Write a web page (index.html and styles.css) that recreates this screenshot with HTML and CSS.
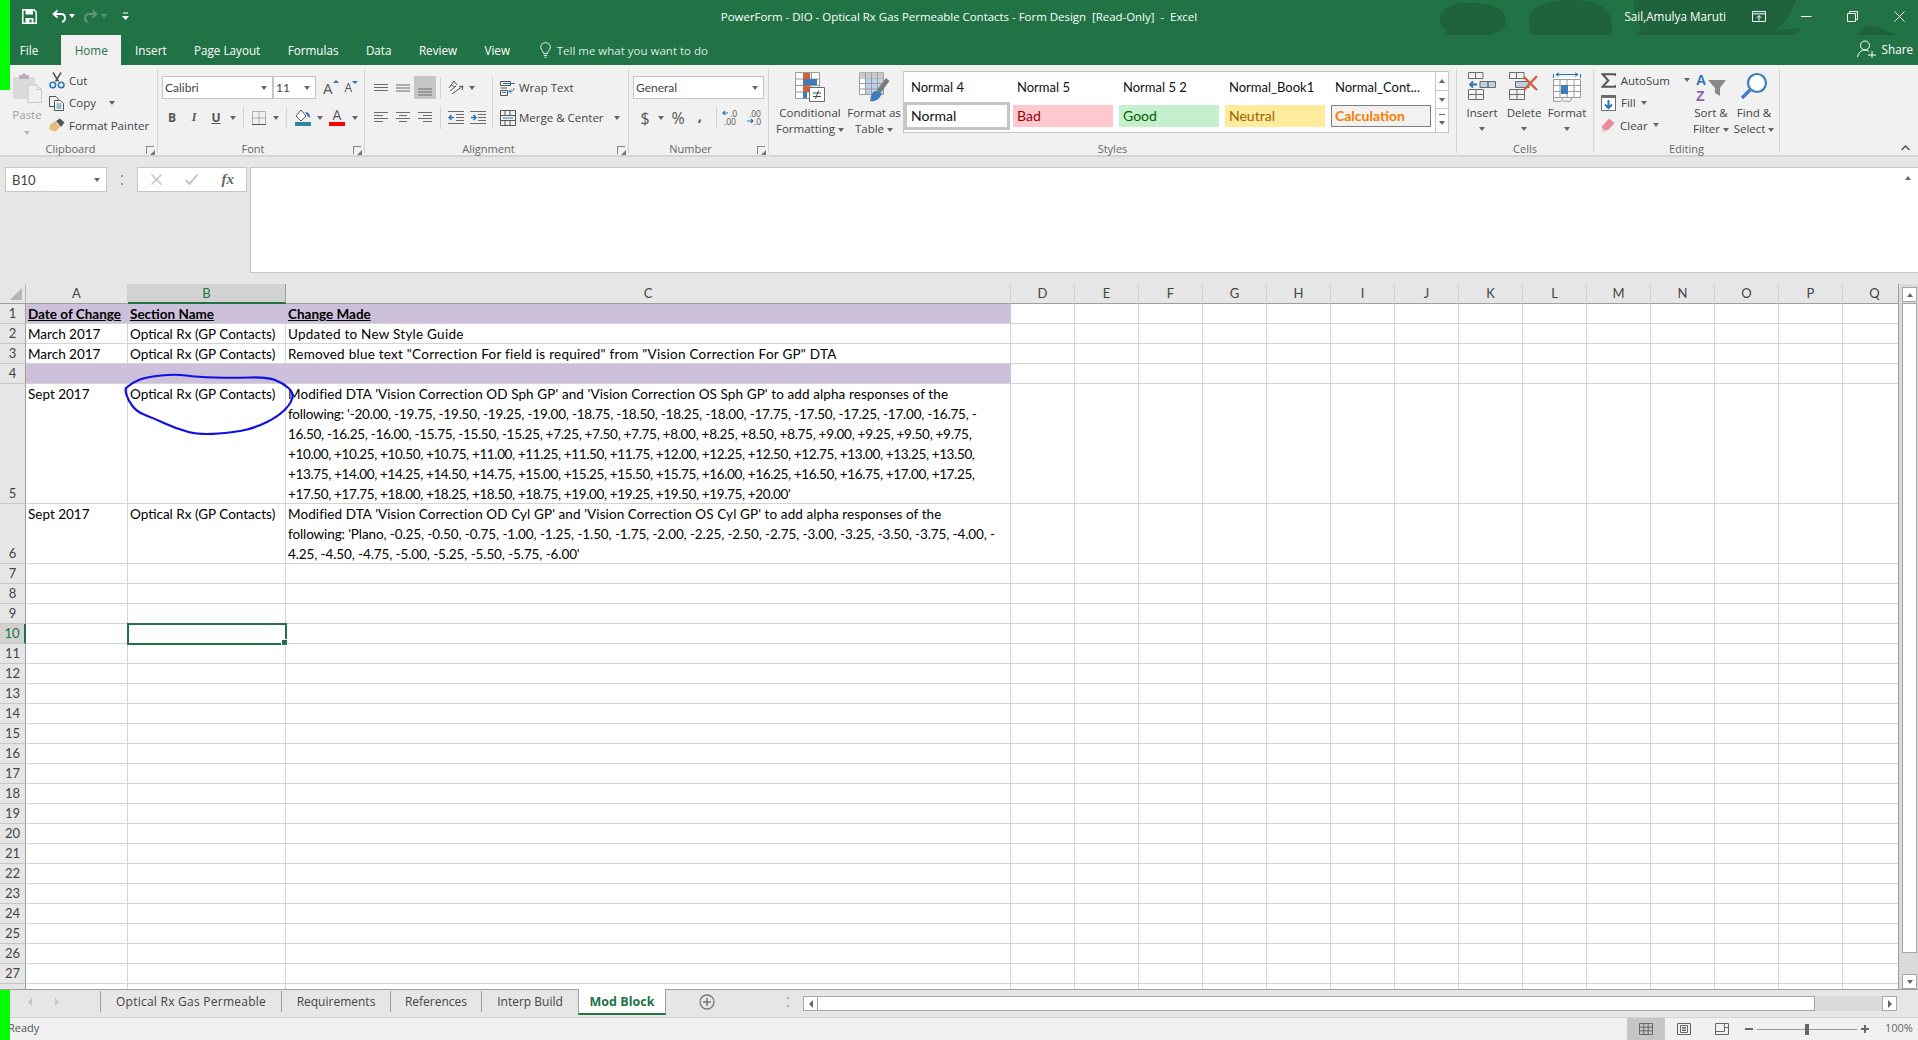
FILE: index.html
```html
<!DOCTYPE html>
<html lang="en">
  <head>
    <meta charset="UTF-8" />
    <title>PowerForm - Excel</title>
    <link rel="stylesheet" href="styles.css">
  </head>
  <body>
    <div class="app">
      <!-- title bar -->
      <header class="titlebar">
        <svg class="clouds" width="480" height="65" viewBox="0 0 480 65">
          <path d="M1 20C1 8 14 2 30 3C50 2 68 8 67 22C67 32 50 38 20 38L0 38L8 31C3 28 1 25 1 20Z" />
          <path d="M90 20C90 6 110 0 135 0C160 0 173 8 173 28L173 38L185 50L70 50L60 40L93 38C91 32 90 26 90 20Z" />
          <path d="M195 0L357 0C352 15 345 27 335 30L362 28C355 40 335 46 300 46L200 46L188 42C196 38 200 32 202 28C198 20 195 10 195 0Z" />
          <path d="M418 38C418 30 426 25 434 26C442 27 447 31 449 32C458 32 462 38 460 43C458 50 440 56 425 48C420 45 418 42 418 38Z" />
        </svg>
        <div class="qat">
          <svg width="15" height="15" viewBox="0 0 15 15"><path d="M1 .8H12L14.2 3V14.2H.8V.8Z" fill="none" stroke="#fff" stroke-width="1.5"/><path d="M3.5 1H11V5.5H3.5ZM3.5 9H11.500V14H3.500Z" fill="#fff"/><path d="M7.500 10.500H9.500V13.500H7.500Z" fill="#217346"/></svg>
          <svg class="qat-undo" width="14" height="14" viewBox="0 0 14 14"><path d="M5.500 1.500L1.500 5L5.500 8.500M2 5H9C11.500 5 13 6.800 13 9C13 11 11.800 12.500 10 13" fill="none" stroke="#fff" stroke-width="1.800"/></svg>
          <span class="caret white"></span>
          <svg class="qat-redo" width="14" height="14" viewBox="0 0 14 14"><path d="M8.500 1.500L12.500 5L8.500 8.500M12 5H5C2.500 5 1 6.800 1 9C1 11 2.200 12.500 4 13" fill="none" stroke="#62997b" stroke-width="1.800"/></svg>
          <span class="caret dim"></span>
          <svg class="qat-more" width="7" height="8" viewBox="0 0 7 8"><path d="M1 .5H6V1.500H1ZM0 4H7L3.500 8Z" fill="#fff"/></svg>
        </div>
        <div class="doc-title">PowerForm - DIO - Optical Rx Gas Permeable Contacts - Form Design&nbsp; [Read-Only]&nbsp; -&nbsp; Excel</div>
        <div class="win-area">
          <span class="user">Sail,Amulya Maruti</span>
          <svg class="win-display" width="14" height="11" viewBox="0 0 14 11"><path d="M.5.500H13.500V10.500H.5ZM.5 2.800H13.500" fill="none" stroke="#fff"/><path d="M7 9.500V4.800M4.800 6.800L7 4.500L9.200 6.800" fill="none" stroke="#fff"/></svg>
          <svg class="win-min" width="11" height="11" viewBox="0 0 11 11"><path d="M0 5.500H10.500" stroke="#fff"/></svg>
          <svg class="win-max" width="11" height="11" viewBox="0 0 11 11"><path d="M.5 2.500H8.500V10.500H.5ZM2.500 2.500V.5H10.500V8.500H8.500" fill="none" stroke="#fff"/></svg>
          <svg class="win-close" width="11" height="11" viewBox="0 0 11 11"><path d="M.5.5L10.500 10.500M10.500.5L.5 10.500" stroke="#fff"/></svg>
        </div>
      </header>

      <nav class="tabs">
        <a href="#" class="tab tab-file">File</a>
        <a href="#" class="tab active">Home</a>
        <a href="#" class="tab">Insert</a>
        <a href="#" class="tab">Page Layout</a>
        <a href="#" class="tab">Formulas</a>
        <a href="#" class="tab">Data</a>
        <a href="#" class="tab">Review</a>
        <a href="#" class="tab">View</a>
        <span class="tell">
          <svg width="11" height="16" viewBox="0 0 11 16"><path d="M3.500 11.500C3.500 9 .7 8 .7 5.200C.7 2.500 2.800.7 5.500.7C8.200.7 10.300 2.500 10.300 5.200C10.300 8 7.500 9 7.500 11.500ZM3.800 13.500H7.200M4.500 15.300H6.500" fill="none" stroke="#e6efe9"/></svg>
          Tell me what you want to do
        </span>
        <span class="share">
          <svg width="20" height="18" viewBox="0 0 20 18"><circle cx="8" cy="5.500" r="4.500" fill="none" stroke="#fff"/><path d="M.5 17C1.500 12.500 4 10 8 10C9.500 10 11 10.500 12 11.500M11 15H19M15 11V18" fill="none" stroke="#fff"/></svg>
          Share
        </span>
      </nav>

      <!-- ribbon -->
      <section class="ribbon">
        <div class="group g-clipboard">
          <div class="body clip-body">
            <div class="paste">
              <svg width="29" height="30" viewBox="0 0 29 30"><path d="M0 4H22V26H0Z" fill="#dcd9dc"/><path d="M6 2H9C9 0 13 0 13 2H16V6H6Z" fill="#b5b3b5"/><path d="M15 12H24L28.500 16.500V29.500H15Z" fill="#f1eff1" stroke="#c8c6c8"/><path d="M24 12V16.500H28.500" fill="none" stroke="#c8c6c8"/></svg>
              <span class="paste-label">Paste</span>
              <span class="caret dis"></span>
            </div>
            <div class="clip-list">
              <div class="clip-row">
                <svg width="16" height="17" viewBox="0 0 16 17"><path d="M4 .5L9.500 9.500M12 .5L6.500 9.500" stroke="#555" stroke-width="1.500" fill="none"/><circle cx="3.800" cy="13" r="2.800" fill="none" stroke="#2e75b6" stroke-width="1.500"/><circle cx="12.200" cy="13" r="2.800" fill="none" stroke="#2e75b6" stroke-width="1.500"/></svg>
                <span>Cut</span>
              </div>
              <div class="clip-row">
                <svg width="16" height="16" viewBox="0 0 16 16"><path d="M.5 1.500H7L9 3.500V5M.5 1.500V11.500H5" fill="none" stroke="#555"/><path d="M5.500 5.500H11.500L14.500 8.500V15.500H5.500Z" fill="#fff" stroke="#555"/><path d="M7.500 9H12.500M7.500 11H12.500M7.500 13H12.500" stroke="#2e75b6"/></svg>
                <span>Copy</span>
                <span class="caret caret-copy"></span>
              </div>
              <div class="clip-row">
                <svg width="16" height="14" viewBox="0 0 16 14"><path d="M1 7L6 3L11 9L6 14C4 12.500 2.500 12 0 11.500Z" fill="#e5bb7a"/><path d="M7 3L11 0.500L15.500 4.500L12 9Z" fill="#555"/></svg>
                <span>Format Painter</span>
              </div>
            </div>
          </div>
          <div class="label">Clipboard</div>
          <i class="launcher"></i>
        </div>

        <div class="group g-font">
          <div class="body stack">
            <div class="row row-font">
              <div class="select sel-font"><span>Calibri</span><b class="caret"></b></div>
              <div class="select sel-size"><span>11</span><b class="caret"></b></div>
              <span class="grow-a">A<i class="mini up"></i></span>
              <span class="shrink-a">A<i class="mini down"></i></span>
            </div>
            <div class="row row-fmt">
              <span class="tbtn fmt-b">B</span>
              <span class="tbtn fmt-i">I</span>
              <span class="tbtn fmt-u">U</span>
              <span class="cbtn"><b class="caret"></b></span>
              <i class="sep"></i>
              <span class="tbtn">
                <svg width="14" height="14" viewBox="0 0 14 14"><path d="M.5.5H13.500V13.500H.5ZM7 .5V13.500M.5 7H13.500" fill="none" stroke="#777" stroke-dasharray="1 1"/><path d="M0 13.500H14" stroke="#555"/></svg>
              </span>
              <span class="cbtn"><b class="caret"></b></span>
              <i class="sep"></i>
              <span class="tbtn w24">
                <svg width="17" height="17" viewBox="0 0 17 17"><path d="M6 1L1 7L6 12L11 7Z" fill="#fff" stroke="#555"/><path d="M10 3C14 3 15 6 15 9L12.500 7Z" fill="#2e75b6"/><path d="M0 13H16V17H0Z" fill="#31859c"/></svg>
              </span>
              <span class="cbtn w9"><b class="caret"></b></span>
              <span class="tbtn w26 color-a">A</span>
              <span class="cbtn w10"><b class="caret"></b></span>
            </div>
          </div>
          <div class="label">Font</div>
          <i class="launcher"></i>
        </div>

        <div class="group g-align">
          <div class="body split">
            <div class="stack">
              <div class="row">
                <span class="tbtn"><svg width="14" height="8" viewBox="0 0 14 8"><path d="M0 .5H14M0 3.500H14M0 6.500H14" stroke="#6b6b6b" /></svg></span>
                <span class="tbtn"><svg width="14" height="8" viewBox="0 0 14 8"><path d="M0 1H14M0 4H14M0 7H14" stroke="#6b6b6b" /></svg></span>
                <span class="tbtn on align-bottom"><svg width="14" height="8" viewBox="0 0 14 8"><path d="M0 1H14M0 4H14M0 7H14" stroke="#6b6b6b" /></svg></span>
                <i class="sep narrow"></i>
                <span class="tbtn">
                  <svg width="16" height="15" viewBox="0 0 16 15"><path d="M1 8L6 1L9 5M3 4.500L7 7M8 6L2 11" fill="none" stroke="#555"/><path d="M4 14L15 6M15 6L11 6.500M15 6L14 10" fill="none" stroke="#555"/></svg>
                </span>
                <span class="cbtn w10"><b class="caret"></b></span>
              </div>
              <div class="row">
                <span class="tbtn"><svg width="14" height="11" viewBox="0 0 14 11"><path d="M0 .5H14M0 3.500H9M0 6.500H14M0 9.500H9" stroke="#6b6b6b" /></svg></span>
                <span class="tbtn"><svg width="14" height="11" viewBox="0 0 14 11"><path d="M0 .5H14M3 3.500H11M0 6.500H14M3 9.500H11" stroke="#6b6b6b" /></svg></span>
                <span class="tbtn"><svg width="14" height="11" viewBox="0 0 14 11"><path d="M0 .5H14M5 3.500H14M0 6.500H14M5 9.500H14" stroke="#6b6b6b" /></svg></span>
                <i class="sep narrow"></i>
                <span class="tbtn"><svg width="16" height="13" viewBox="0 0 16 13"><path d="M0 .5H16M8 3.500H16M8 6.500H16M8 9.500H16M0 12.500H16" stroke="#6b6b6b"/><path d="M6 6.500H1M3.500 4L1 6.500L3.500 9" fill="none" stroke="#2e75b6" stroke-width="1.500"/></svg></span>
                <span class="tbtn"><svg width="16" height="13" viewBox="0 0 16 13"><path d="M0 .5H16M8 3.500H16M8 6.500H16M8 9.500H16M0 12.500H16" stroke="#6b6b6b"/><path d="M1 6.500H6M3.500 4L6 6.500L3.500 9" fill="none" stroke="#2e75b6" stroke-width="1.500"/></svg></span>
              </div>
            </div>
            <i class="sep tall"></i>
            <div class="stack wide">
              <div class="row">
                <svg class="ic-left" width="16" height="16" viewBox="0 0 16 16"><path d="M.5 1.500H10.500V5.500H.5ZM.5 10.500H7.500V15.500H.5ZM.5 8H7" fill="none" stroke="#555"/><path d="M3 3.500H15M2 12.500H6" stroke="#2e75b6"/><path d="M14 8C14 11 12 11.500 9 11.500M11 9.500L9 11.500L11 13.500" fill="none" stroke="#2e75b6"/></svg>
                <span class="txt">Wrap Text</span>
              </div>
              <div class="row">
                <svg class="ic-left" width="16" height="16" viewBox="0 0 16 16"><path d="M.5.5H15.500V15.500H.5ZM.5 5.500H15.500M.5 10.500H15.500M5 .5V5.500M10 .5V5.500M5 10.500V15.500M10 10.500V15.500" fill="none" stroke="#555"/><path d="M3 8H13" stroke="#2e75b6"/></svg>
                <span class="txt">Merge &amp; Center</span>
                <b class="caret caret-merge"></b>
              </div>
            </div>
          </div>
          <div class="label">Alignment</div>
          <i class="launcher"></i>
        </div>

        <div class="group g-number">
          <div class="body stack">
            <div class="row">
              <div class="select sel-num"><span>General</span><b class="caret"></b></div>
            </div>
            <div class="row row-num">
              <span class="tbtn num-sym">$</span>
              <span class="cbtn w9"><b class="caret"></b></span>
              <span class="tbtn w26 num-sym">%</span>
              <span class="tbtn w18 num-comma">,</span>
              <i class="sep"></i>
              <svg class="dec" width="16" height="20" viewBox="0 0 16 20"><path d="M6 5H1M3 3L1 5L3 7" fill="none" stroke="#2e75b6" stroke-width="1.200"/><text x="8" y="9" class="dec-txt">.0</text><text x="2" y="17" class="dec-txt">.00</text></svg>
              <svg class="inc" width="16" height="20" viewBox="0 0 16 20"><text x="3" y="9" class="dec-txt">.00</text><path d="M1 13H7M5 11L7 13L5 15" fill="none" stroke="#2e75b6" stroke-width="1.200"/><text x="8" y="17" class="dec-txt">.0</text></svg>
            </div>
          </div>
          <div class="label">Number</div>
          <i class="launcher"></i>
        </div>

        <div class="group g-styles">
          <div class="body styles-body">
            <div class="big w64">
              <span class="big-ic">
                <svg width="30" height="30" viewBox="0 0 30 30"><path d="M.5.5H24.500V26.500H.5ZM8.500.5V26.500M16.500.5V26.500M.5 7H24.500M.5 13.500H24.500M.5 20H24.500" fill="#fff" stroke="#9c9c9c"/><path d="M8 1H15V7H8Z" fill="#d2603a"/><path d="M8 7H22V13H8Z" fill="#3e7db9"/><path d="M8 13H15V20H8Z" fill="#d2603a"/><path d="M8 20H12V26H8Z" fill="#3e7db9"/><path d="M14.500 15.500H29.500V29.500H14.500Z" fill="#fff" stroke="#6b6b6b"/><path d="M18 21H26M18 24.500H26M20.500 27L23.500 18.500" fill="none" stroke="#444"/></svg>
              </span>
              <span>Conditional</span>
              <span>Formatting <b class="caret"></b></span>
            </div>
            <div class="big w64">
              <span class="big-ic">
                <svg width="31" height="30" viewBox="0 0 31 30"><path d="M.5.5H24.500V22.500H.5Z" fill="#fff" stroke="#9c9c9c"/><path d="M.5.5H24.500V5H.5Z" fill="#c9c9c9"/><path d="M6.500 6H24V22H6.500Z" fill="#bdd0e7"/><path d="M.5 6H24.500M.5 11.500H24.500M.5 17H24.500M6.500.5V22.500M12.500.5V22.500M18.500.5V22.500" stroke="#9c9c9c" fill="none"/><path d="M18 18L27 6L30.500 9L21.500 21Z" fill="#7a7a7a"/><path d="M20 19.500C16 17 12 20 11 29C15 30 21 28 22.500 21.500Z" fill="#3e7db9"/></svg>
              </span>
              <span>Format as</span>
              <span>Table <b class="caret"></b></span>
            </div>
            <div class="gallery">
              <div class="gal-grid">
                <span class="gal-name">Normal 4</span>
                <span class="gal-name">Normal 5</span>
                <span class="gal-name">Normal 5 2</span>
                <span class="gal-name">Normal_Book1</span>
                <span class="gal-name">Normal_Cont...</span>
                <span class="gal-cell st-normal">Normal</span>
                <span class="gal-cell st-bad">Bad</span>
                <span class="gal-cell st-good">Good</span>
                <span class="gal-cell st-neutral">Neutral</span>
                <span class="gal-cell st-calc">Calculation</span>
              </div>
              <div class="gal-scroll">
                <span><b class="caret flip"></b></span>
                <span><b class="caret"></b></span>
                <span class="gal-more"><b class="caret"></b></span>
              </div>
            </div>
          </div>
          <div class="label">Styles</div>
        </div>

        <div class="group g-cells">
          <div class="body cells-body">
            <div class="big w42">
              <span class="big-ic">
                <svg width="28" height="28" viewBox="0 0 28 28"><path d="M.5.5H7.500V6.500H.5ZM7.500.5H15V6.500H7.500ZM.5 17.500H15.500V27.500H.5ZM8 17.500V27.500M.5 22.500H15.500" fill="none" stroke="#6b6b6b"/><path d="M12 9.500H20V15.500H12ZM20 9.500H27.500V15.500H20Z" fill="#bdd0e7" stroke="#6b6b6b"/><path d="M9 12.500H2M5 9.500L2 12.500L5 15.500" fill="none" stroke="#2e75b6" stroke-width="1.800"/></svg>
              </span>
              <span>Insert</span>
              <b class="caret big-caret"></b>
            </div>
            <div class="big w42">
              <span class="big-ic">
                <svg width="30" height="28" viewBox="0 0 30 28"><path d="M.5.5H7.500V6.500H.5ZM7.500.5H15V6.500H7.500ZM.5 17.500H15.500V27.500H.5ZM8 17.500V27.500M.5 22.500H15.500" fill="none" stroke="#6b6b6b"/><path d="M6.500 9.500H20V15.500H6.500Z" fill="#bdd0e7" stroke="#6b6b6b"/><path d="M15 5L28 18M28 4L15 18" stroke="#d2603a" stroke-width="2.400"/></svg>
              </span>
              <span>Delete</span>
              <b class="caret big-caret"></b>
            </div>
            <div class="big w44">
              <span class="big-ic">
                <svg width="28" height="32" viewBox="0 0 28 32"><path d="M.5 5.500H27.500V24.500H.5Z" fill="#fff"/><path d="M.5 2V6M27.500 2V6M3 2.500H25M3 2.500L6 .8M3 2.500L6 4.300M25 2.500L22 .8M25 2.500L22 4.300" fill="none" stroke="#2e75b6"/><path d="M.5 7.500H27.500V25.500H.5ZM7 7.500V25.500M14 7.500V25.500M21 7.500V25.500M.5 13.500H27.500M.5 19.500H27.500" fill="none" stroke="#9c9c9c"/><path d="M8 13H15V22H8Z" fill="#3e7db9"/><path d="M.5 25.500V29.500H8L10 26M10 29L17 29.500L19 26" fill="none" stroke="#9c9c9c"/></svg>
              </span>
              <span>Format</span>
              <b class="caret big-caret"></b>
            </div>
          </div>
          <div class="label">Cells</div>
        </div>

        <div class="group g-edit">
          <div class="body edit-body">
            <div class="edit-list">
              <div class="clip-row">
                <svg width="15" height="15" viewBox="0 0 15 15"><path d="M15 3V1H1.500L7.500 7.500L1.500 14H15V12" fill="none" stroke="#555" stroke-width="2"/></svg>
                <span>AutoSum</span>
                <b class="caret caret-sum"></b>
              </div>
              <div class="clip-row">
                <svg width="15" height="16" viewBox="0 0 15 16"><path d="M.5.5H14.500V15.500H.5Z" fill="#fff" stroke="#6b6b6b"/><path d="M.5.5H14.500V3H.5Z" fill="#6b6b6b"/><path d="M7.500 5V13M4 9.500L7.500 13L11 9.500" fill="none" stroke="#2e75b6" stroke-width="2"/></svg>
                <span>Fill</span>
                <b class="caret"></b>
              </div>
              <div class="clip-row">
                <svg width="14" height="14" viewBox="0 0 14 14"><path d="M8 .5L13.500 5L7 12H3.500L.5 9Z" fill="#ec8a99"/><path d="M.5 9L3.500 12L5 14H2Z" fill="#f3bcc4"/></svg>
                <span>Clear</span>
                <b class="caret"></b>
              </div>
            </div>
            <div class="big w42">
              <span class="big-ic">
                <span class="az"><span class="az-a">A</span><span class="az-z">Z</span></span>
                <svg class="funnel" width="18" height="17" viewBox="0 0 18 17"><path d="M0 0H18L12 8V16L7 13V8Z" fill="#8a8a8a"/></svg>
              </span>
              <span>Sort &amp;</span>
              <span>Filter <b class="caret"></b></span>
            </div>
            <div class="big w44">
              <span class="big-ic">
                <svg width="28" height="28" viewBox="0 0 28 28"><circle cx="17" cy="11" r="9" fill="#fff" stroke="#3e7db9" stroke-width="2.200"/><path d="M10 18L2 26" stroke="#3e7db9" stroke-width="3.400"/></svg>
              </span>
              <span>Find &amp;</span>
              <span>Select <b class="caret"></b></span>
            </div>
          </div>
          <div class="label">Editing</div>
        </div>

        <svg class="collapse" width="9" height="6" viewBox="0 0 9 6"><path d="M.5 5L4.500 1L8.500 5" fill="none" stroke="#555" stroke-width="1.500"/></svg>
      </section>

      <!-- formula bar -->
      <section class="formula">
        <div class="namebox"><span>B10</span><b class="caret"></b></div>
        <div class="dots"></div>
        <div class="fbtns">
          <svg width="11" height="11" viewBox="0 0 11 11"><path d="M.5.5L10.500 10.500M10.500.5L.5 10.500" stroke="#c4c4c4" stroke-width="1.500"/></svg>
          <svg width="13" height="11" viewBox="0 0 13 11"><path d="M.8 6L4.500 10L12.300 .8" fill="none" stroke="#c4c4c4" stroke-width="2"/></svg>
          <span class="fx">fx</span>
        </div>
        <div class="finput"><b class="caret flip"></b></div>
      </section>

      <!-- sheet -->
      <section class="sheet-area">
        <div class="sheet">
          <div class="row-line head-line">
            <div class="corner"><i></i></div>
            <div class="colhead ca">A</div>
            <div class="colhead cb sel">B</div>
            <div class="colhead cc">C</div>
            <div class="colhead c64">D</div><div class="colhead c64">E</div><div class="colhead c64">F</div><div class="colhead c64">G</div><div class="colhead c64">H</div><div class="colhead c64">I</div><div class="colhead c64">J</div><div class="colhead c64">K</div><div class="colhead c64">L</div><div class="colhead c64">M</div><div class="colhead c64">N</div><div class="colhead c64">O</div><div class="colhead c64">P</div><div class="colhead c64">Q</div>
          </div>
          <div class="row-line fill-row heading">
            <div class="rowhead">1</div><div class="cell ca"><u>Date of Change</u></div><div class="cell cb"><u>Section Name</u></div><div class="cell cc"><u>Change Made</u></div><div class="rest"></div>
          </div>
          <div class="row-line">
            <div class="rowhead">2</div><div class="cell ca">March 2017</div><div class="cell cb">Optical Rx (GP Contacts)</div><div class="cell cc"><span class="ls-p2">Updated to New Style Guide</span></div><div class="rest"></div>
          </div>
          <div class="row-line">
            <div class="rowhead">3</div><div class="cell ca">March 2017</div><div class="cell cb">Optical Rx (GP Contacts)</div><div class="cell cc"><span class="ls-p2">Removed blue text "Correction For field is required" from "Vision Correction For GP" DTA</span></div><div class="rest"></div>
          </div>
          <div class="row-line fill-row">
            <div class="rowhead">4</div><div class="cell ca"></div><div class="cell cb"></div><div class="cell cc"></div><div class="rest"></div>
          </div>
          <div class="row-line h120">
            <div class="rowhead">5</div><div class="cell ca">Sept 2017</div><div class="cell cb">Optical Rx (GP Contacts)</div>
            <div class="cell cc"><span class="ls-p1">Modified DTA 'Vision Correction OD Sph GP' and 'Vision Correction OS Sph GP' to add alpha responses of the</span><br><span class="ls-m2">following: '-20.00, -19.75, -19.50, -19.25, -19.00, -18.75, -18.50, -18.25, -18.00, -17.75, -17.50, -17.25, -17.00, -16.75, -</span><br><span class="ls-m3">16.50, -16.25, -16.00, -15.75, -15.50, -15.25, +7.25, +7.50, +7.75, +8.00, +8.25, +8.50, +8.75, +9.00, +9.25, +9.50, +9.75,</span><br><span class="ls-m4">+10.00, +10.25, +10.50, +10.75, +11.00, +11.25, +11.50, +11.75, +12.00, +12.25, +12.50, +12.75, +13.00, +13.25, +13.50,</span><br><span class="ls-m4">+13.75, +14.00, +14.25, +14.50, +14.75, +15.00, +15.25, +15.50, +15.75, +16.00, +16.25, +16.50, +16.75, +17.00, +17.25,</span><br><span class="ls-m4">+17.50, +17.75, +18.00, +18.25, +18.50, +18.75, +19.00, +19.25, +19.50, +19.75, +20.00'</span></div>
            <div class="rest"></div>
          </div>
          <div class="row-line h60">
            <div class="rowhead">6</div><div class="cell ca">Sept 2017</div><div class="cell cb">Optical Rx (GP Contacts)</div>
            <div class="cell cc"><span class="ls-p1">Modified DTA 'Vision Correction OD Cyl GP' and 'Vision Correction OS Cyl GP' to add alpha responses of the</span><br><span class="ls-m1">following: 'Plano, -0.25, -0.50, -0.75, -1.00, -1.25, -1.50, -1.75, -2.00, -2.25, -2.50, -2.75, -3.00, -3.25, -3.50, -3.75, -4.00, -</span><br><span class="ls-m1">4.25, -4.50, -4.75, -5.00, -5.25, -5.50, -5.75, -6.00'</span></div>
            <div class="rest"></div>
          </div>
          <div class="row-line"><div class="rowhead">7</div><div class="cell ca"></div><div class="cell cb"></div><div class="cell cc"></div><div class="rest"></div></div>
          <div class="row-line"><div class="rowhead">8</div><div class="cell ca"></div><div class="cell cb"></div><div class="cell cc"></div><div class="rest"></div></div>
          <div class="row-line"><div class="rowhead">9</div><div class="cell ca"></div><div class="cell cb"></div><div class="cell cc"></div><div class="rest"></div></div>
          <div class="row-line"><div class="rowhead sel">10</div><div class="cell ca"></div><div class="cell cb active-cell"></div><div class="cell cc"></div><div class="rest"></div></div>
          <div class="row-line"><div class="rowhead">11</div><div class="cell ca"></div><div class="cell cb"></div><div class="cell cc"></div><div class="rest"></div></div>
          <div class="row-line"><div class="rowhead">12</div><div class="cell ca"></div><div class="cell cb"></div><div class="cell cc"></div><div class="rest"></div></div>
          <div class="row-line"><div class="rowhead">13</div><div class="cell ca"></div><div class="cell cb"></div><div class="cell cc"></div><div class="rest"></div></div>
          <div class="row-line"><div class="rowhead">14</div><div class="cell ca"></div><div class="cell cb"></div><div class="cell cc"></div><div class="rest"></div></div>
          <div class="row-line"><div class="rowhead">15</div><div class="cell ca"></div><div class="cell cb"></div><div class="cell cc"></div><div class="rest"></div></div>
          <div class="row-line"><div class="rowhead">16</div><div class="cell ca"></div><div class="cell cb"></div><div class="cell cc"></div><div class="rest"></div></div>
          <div class="row-line"><div class="rowhead">17</div><div class="cell ca"></div><div class="cell cb"></div><div class="cell cc"></div><div class="rest"></div></div>
          <div class="row-line"><div class="rowhead">18</div><div class="cell ca"></div><div class="cell cb"></div><div class="cell cc"></div><div class="rest"></div></div>
          <div class="row-line"><div class="rowhead">19</div><div class="cell ca"></div><div class="cell cb"></div><div class="cell cc"></div><div class="rest"></div></div>
          <div class="row-line"><div class="rowhead">20</div><div class="cell ca"></div><div class="cell cb"></div><div class="cell cc"></div><div class="rest"></div></div>
          <div class="row-line"><div class="rowhead">21</div><div class="cell ca"></div><div class="cell cb"></div><div class="cell cc"></div><div class="rest"></div></div>
          <div class="row-line"><div class="rowhead">22</div><div class="cell ca"></div><div class="cell cb"></div><div class="cell cc"></div><div class="rest"></div></div>
          <div class="row-line"><div class="rowhead">23</div><div class="cell ca"></div><div class="cell cb"></div><div class="cell cc"></div><div class="rest"></div></div>
          <div class="row-line"><div class="rowhead">24</div><div class="cell ca"></div><div class="cell cb"></div><div class="cell cc"></div><div class="rest"></div></div>
          <div class="row-line"><div class="rowhead">25</div><div class="cell ca"></div><div class="cell cb"></div><div class="cell cc"></div><div class="rest"></div></div>
          <div class="row-line"><div class="rowhead">26</div><div class="cell ca"></div><div class="cell cb"></div><div class="cell cc"></div><div class="rest"></div></div>
          <div class="row-line"><div class="rowhead">27</div><div class="cell ca"></div><div class="cell cb"></div><div class="cell cc"></div><div class="rest"></div></div>
          <div class="row-line"><div class="rowhead"></div><div class="cell ca"></div><div class="cell cb"></div><div class="cell cc"></div><div class="rest"></div></div>
        </div>
        <div class="vscroll">
          <span class="sbtn"><b class="caret flip"></b></span>
          <span class="vthumb"></span>
          <span class="sbtn sbtn-down"><b class="caret"></b></span>
        </div>
      </section>

      <!-- sheet tabs -->
      <section class="tabbar">
        <span class="nav-arrows"><i class="arrow-l"></i><i class="arrow-r"></i></span>
        <a href="#" class="stab st-optical">Optical Rx Gas Permeable</a>
        <a href="#" class="stab st-req">Requirements</a>
        <a href="#" class="stab st-ref">References</a>
        <a href="#" class="stab st-interp">Interp Build</a>
        <a href="#" class="stab current">Mod Block</a>
        <svg class="add-sheet" width="16" height="16" viewBox="0 0 16 16"><circle cx="8" cy="8" r="7" fill="none" stroke="#777" stroke-width="1.300"/><path d="M8 4V12M4 8H12" stroke="#777" stroke-width="1.500"/></svg>
        <span class="tab-dots"></span>
        <div class="hscroll">
          <span class="hbtn"><i class="arrow-l dark"></i></span>
          <span class="hthumb"></span>
          <span class="hbtn hbtn-r"><i class="arrow-r dark"></i></span>
        </div>
      </section>

      <footer class="status">
        <span class="ready">Ready</span>
        <div class="views">
          <span class="view on"><svg width="14" height="12" viewBox="0 0 14 12"><path d="M.5.5H13.500V11.500H.5ZM4.800.5V11.500M9.200.5V11.500M.5 4.200H13.500M.5 7.800H13.500" fill="none" stroke="#666"/></svg></span>
          <span class="view"><svg width="14" height="12" viewBox="0 0 14 12"><path d="M.5.5H13.500V11.500H.5Z" fill="none" stroke="#666"/><path d="M3.500 2.500H10.500V9.500H3.500ZM5 4.500H9M5 6H9M5 7.500H9" fill="none" stroke="#666"/></svg></span>
          <span class="view"><svg width="14" height="12" viewBox="0 0 14 12"><path d="M.5.5H13.500V11.500H.5ZM.5 8.500H9.500V.5M9.500 4.500H13.500" fill="none" stroke="#666"/></svg></span>
        </div>
        <div class="zoom">
          <i class="zoom-minus"></i>
          <span class="slider"><i></i></span>
          <i class="zoom-plus"></i>
        </div>
        <span class="pct">100%</span>
      </footer>

      <!-- over the sheet: pen mark and the green strips on the left edge -->
      <svg class="ink" width="1918" height="1040" viewBox="0 0 1918 1040"><path d="M126 388Q133 382 140 379.500Q147 377 161 375.500Q175 374 186 375.500Q197 377 215 377.500Q233 378 250 377.500Q267 377 275 380Q283 383 288.500 388Q294 393 292 399Q290 405 283.500 411Q277 417 267 422Q257 427 247 429.500Q237 432 218.500 433.500Q200 435 188.500 432Q177 429 165 423.500Q153 418 145 415Q137 412 132.500 406Q128 400 126.500 395Q125 390 126 388Z" fill="none" stroke="#1010e4" stroke-width="2.200"/></svg>
      <div class="strip strip-top"></div>
      <div class="strip strip-bottom"></div>
    </div>
  </body>
</html>
```
FILE: styles.css
```css
* {
  box-sizing: border-box;
}

body {
  margin: 0;
  font-family: "Open Sans", "Liberation Sans", sans-serif;
  font-size: 11.5px;
  color: #444;
  background: #e6e6e6;
}

a {
  text-decoration: none;
  color: inherit;
}

.app {
  position: relative;
  width: 1918px;
  height: 1040px;
  overflow: hidden;
  display: flex;
  flex-direction: column;
}

/* small triangle used all over the ribbon */
.caret {
  display: inline-block;
  width: 0;
  height: 0;
  border-left: 3.5px solid transparent;
  border-right: 3.5px solid transparent;
  border-top: 4px solid #666;
  vertical-align: middle;
}

.caret.flip {
  border-top: 0;
  border-bottom: 4px solid #666;
}

.caret.white {
  border-top-color: #fff;
  margin-left: 3px;
}

.caret.dim {
  border-top-color: #62997b;
  margin-left: 3px;
}

.caret.dis {
  border-top-color: #b4b4b4;
}

/* title bar */
.titlebar {
  position: relative;
  height: 35px;
  padding-bottom: 3px;
  background: #217346;
  color: #fff;
  display: grid;
  grid-template-columns: 1fr auto 1fr;
  align-items: center;
  flex: none;
}

.clouds {
  position: absolute;
  left: 1439px;
  top: 0;
  fill: #1e633b;
}

.qat {
  position: relative;
  display: flex;
  align-items: center;
  padding-left: 22px;
}

.qat-undo {
  margin-left: 15px;
}

.qat-redo {
  margin-left: 9px;
}

.qat-more {
  margin-left: 15px;
}

.doc-title {
  position: relative;
  font-size: 11.45px;
  white-space: nowrap;
}

.win-area {
  position: relative;
  display: flex;
  align-items: center;
  justify-content: flex-end;
}

.user {
  font-size: 11.7px;
  margin-right: 26px;
}

.win-display {
  margin-right: 35px;
}

.win-min {
  margin-right: 35px;
}

.win-max {
  margin-right: 36px;
}

.win-close {
  margin-right: 13px;
}

.tabs {
  position: relative;
  height: 30px;
  background: #217346;
  color: #fff;
  display: flex;
  align-items: stretch;
  flex: none;
  font-size: 11.7px;
}

.tab {
  display: flex;
  align-items: center;
  justify-content: center;
  padding: 0 13.7px;
}

.tab-file {
  width: 58px;
  margin-right: 3px;
}

.tab.active {
  background: #f1f1f1;
  color: #217346;
}

.tell {
  display: flex;
  align-items: center;
  gap: 6px;
  margin-left: 16px;
  font-size: 11.5px;
  color: #dfeae4;
}

.share {
  position: absolute;
  right: 5px;
  top: 5px;
  display: flex;
  align-items: center;
  gap: 5px;
  font-size: 11.7px;
}

/* ribbon */
.ribbon {
  position: relative;
  height: 92px;
  padding-top: 4px;
  background: #f1f1f1;
  border-bottom: 2px solid #d4d4d4;
  display: flex;
  align-items: flex-start;
  flex: none;
}

.group {
  position: relative;
  height: 84px;
  border-right: 1px solid #d4d4d4;
  display: flex;
  flex-direction: column;
}

.g-clipboard {
  width: 158px;
}

.g-font {
  width: 207px;
}

.g-align {
  width: 264px;
}

.g-number {
  width: 140px;
}

.g-styles {
  width: 688px;
}

.g-cells {
  width: 137px;
}

.g-edit {
  width: 186px;
}

.body {
  flex: 1;
  min-height: 0;
}

.label {
  height: 16px;
  margin-bottom: -4px;
  line-height: 16px;
  text-align: center;
  font-size: 11px;
  color: #666;
  flex: none;
}

.launcher {
  position: absolute;
  right: 3px;
  bottom: -1px;
  width: 8px;
  height: 8px;
  border-left: 1px solid #888;
  border-top: 1px solid #888;
}

.launcher::after {
  content: "";
  position: absolute;
  right: -1px;
  bottom: -1px;
  border-left: 5px solid transparent;
  border-bottom: 5px solid #777;
}

/* groups with a launcher centre their label in what is left of it */
.g-clipboard .label,
.g-font .label,
.g-align .label,
.g-number .label {
  padding-right: 16px;
}

.stack {
  display: flex;
  flex-direction: column;
  gap: 7px;
  padding-top: 7px;
}

.row {
  display: flex;
  align-items: center;
  height: 23px;
}

.sep {
  display: block;
  width: 1px;
  height: 22px;
  margin: 0 4px;
  background: #d4d4d4;
  flex: none;
}

.sep.narrow {
  margin: 0 4px 0 4px;
}

.sep.tall {
  height: 52px;
  margin: 7px 4px 0 3px;
}

.tbtn {
  width: 22px;
  height: 23px;
  display: flex;
  align-items: center;
  justify-content: center;
  flex: none;
}

.tbtn.on {
  background: #c6c6c6;
}

.align-bottom {
  align-items: flex-end;
  padding-bottom: 3px;
}

.cbtn {
  width: 12px;
  display: flex;
  justify-content: center;
  flex: none;
}

.w24 {
  width: 24px;
}

.w26 {
  width: 26px;
}

.w18 {
  width: 18px;
}

.w9 {
  width: 9px;
}

.w10 {
  width: 10px;
}

/* clipboard */
.clip-body {
  display: flex;
}

.paste {
  width: 28px;
  margin-left: 13px;
  padding-top: 4px;
  display: flex;
  flex-direction: column;
  align-items: center;
}

.paste-label {
  margin-top: 4px;
  margin-bottom: 9px;
  color: #a0a0a0;
}

.clip-list {
  margin-left: 8px;
}

.clip-row {
  height: 22.5px;
  display: flex;
  align-items: center;
  gap: 4px;
  white-space: nowrap;
}

.caret-copy {
  margin-left: 9px;
}

/* font */
.select {
  height: 23px;
  background: #fff;
  border: 1px solid #c6c6c6;
  display: flex;
  align-items: center;
  justify-content: space-between;
  padding: 0 5px 0 2px;
  font-family: Lato, "Open Sans", sans-serif;
  font-size: 12px;
  color: #444;
  flex: none;
}

.sel-font {
  width: 111px;
  margin-left: 4px;
}

.sel-size {
  width: 43px;
}

.grow-a,
.shrink-a {
  position: relative;
  font-size: 15px;
  color: #555;
  margin-left: 7px;
}

.shrink-a {
  font-size: 12px;
  margin-left: 12px;
}

.mini {
  position: absolute;
  right: -6px;
  top: 2px;
  border-left: 3px solid transparent;
  border-right: 3px solid transparent;
}

.mini.up {
  border-bottom: 3px solid #2e75b6;
}

.mini.down {
  border-top: 3px solid #2e75b6;
}

.row-fmt {
  padding-left: 3px;
}

.fmt-b {
  font-weight: 700;
  font-size: 12px;
  color: #555;
}

.fmt-i {
  font-style: italic;
  font-size: 12px;
  font-family: "Liberation Serif", serif;
  font-weight: 700;
  color: #555;
}

.fmt-u {
  text-decoration: underline;
  font-weight: 700;
  font-size: 12px;
  color: #555;
}

.color-a {
  font-size: 14px;
  line-height: 14px;
  color: #555;
  position: relative;
  align-items: flex-start;
  padding-top: 2px;
}

.color-a::after {
  content: "";
  position: absolute;
  left: 5px;
  right: 5px;
  bottom: 3px;
  height: 4px;
  background: #f00;
}

/* alignment */
.split {
  display: flex;
  padding-left: 5px;
}

.wide {
  flex: 1;
}

.ic-left {
  margin-left: 3px;
  flex: none;
}

.txt {
  margin-left: 3px;
  white-space: nowrap;
}

.caret-merge {
  margin-left: 10px;
}

/* number */
.sel-num {
  width: 131px;
  margin-left: 4px;
}

.row-num {
  padding-left: 5px;
}

.num-sym {
  font-size: 16px;
  color: #555;
}

.num-comma {
  font-size: 15px;
  font-weight: 700;
  color: #555;
  padding-bottom: 6px;
}

.row-num .sep {
  margin: 0 4px 0 7px;
}

.dec {
  margin-left: 1px;
}

.inc {
  margin-left: 8px;
}

.dec-txt {
  font-size: 8.5px;
  fill: #555;
  font-family: "Open Sans", sans-serif;
}

/* styles */
.styles-body {
  display: flex;
  padding-left: 9px;
}

.big {
  display: flex;
  flex-direction: column;
  align-items: center;
  padding-top: 3px;
  line-height: 16px;
  white-space: nowrap;
  flex: none;
}

.big-ic {
  height: 33px;
  display: flex;
  align-items: flex-start;
  justify-content: center;
}

.w64 {
  width: 64px;
}

.w42 {
  width: 42px;
}

.w44 {
  width: 44px;
}

.big-caret {
  margin-top: 6px;
}

.gallery {
  width: 546px;
  height: 62px;
  margin-top: 2px;
  margin-left: -3px;
  background: #fff;
  border: 1px solid #c6c6c6;
  display: flex;
  justify-content: space-between;
  flex: none;
}

.gal-grid {
  display: grid;
  grid-template-columns: repeat(5, 100px);
  grid-template-rows: 33px 22px;
  column-gap: 6px;
  padding-left: 3px;
  font-family: Lato, "Open Sans", sans-serif;
  font-size: 13px;
  color: #111;
}

.gal-name {
  display: flex;
  align-items: center;
  padding-left: 4px;
  padding-bottom: 4px;
  white-space: nowrap;
}

.gal-cell {
  display: flex;
  align-items: center;
  padding-left: 4px;
  padding-bottom: 1px;
  font-size: 14px;
}

.st-normal {
  outline: 3px solid #c6c6c6;
  background: #fff;
}

.st-bad {
  background: #ffc7ce;
  color: #9c0006;
}

.st-good {
  background: #c6efce;
  color: #006100;
}

.st-neutral {
  background: #ffeb9c;
  color: #9c6500;
}

.st-calc {
  background: #f2f2f2;
  border: 1px solid #7f7f7f;
  color: #fa7d00;
  font-weight: 700;
  padding-left: 3px;
}

.gal-scroll {
  width: 13px;
  border-left: 1px solid #c6c6c6;
  display: flex;
  flex-direction: column;
}

.gal-scroll span {
  flex: 1;
  display: flex;
  align-items: center;
  justify-content: center;
  border-bottom: 1px solid #c6c6c6;
}

.gal-scroll .caret {
  border-left-width: 3px;
  border-right-width: 3px;
}

.gal-scroll .gal-more {
  border-bottom: 0;
  position: relative;
  padding-top: 5px;
}

.gal-more::before {
  content: "";
  position: absolute;
  left: 3px;
  right: 3px;
  top: 5px;
  height: 1px;
  background: #666;
}

/* cells, editing */
.cells-body {
  display: flex;
  padding-left: 4px;
}

.edit-body {
  display: flex;
}

.edit-list {
  width: 96px;
  padding-left: 7px;
}

.edit-list .clip-row {
  gap: 5px;
}

.caret-sum {
  margin-left: 9px;
}

.az {
  display: flex;
  flex-direction: column;
  width: 12px;
  font-family: "Liberation Sans", sans-serif;
  font-weight: 700;
  font-size: 14px;
  line-height: 16.2px;
}

.funnel {
  margin-top: 8px;
}

.az-a {
  color: #2e75b6;
}

.az-z {
  color: #8e5bb5;
}

.collapse {
  position: absolute;
  left: 1901px;
  top: 80px;
}

/* formula bar */
.formula {
  height: 127px;
  padding: 10px 0 10px 5px;
  background: #e6e6e6;
  display: flex;
  align-items: flex-start;
  flex: none;
}

.namebox {
  width: 102px;
  height: 25px;
  background: #fff;
  border: 1px solid #c6c6c6;
  padding: 0 6px;
  display: flex;
  align-items: center;
  justify-content: space-between;
  font-family: Lato, sans-serif;
  font-size: 13px;
}

.dots {
  width: 2px;
  height: 10px;
  margin: 8px 14px 0 14px;
  border-top: 2px dotted #999;
  border-bottom: 2px dotted #999;
}

.fbtns {
  width: 110px;
  height: 25px;
  background: #fff;
  border: 1px solid #c6c6c6;
  padding: 0 12px 0 13px;
  display: flex;
  align-items: center;
  justify-content: space-between;
}

.fx {
  font-family: "Liberation Serif", serif;
  font-style: italic;
  font-size: 15px;
  font-weight: 700;
  color: #666;
}

.finput {
  flex: 1;
  height: 106px;
  margin-left: 3px;
  background: #fff;
  border: 1px solid #c6c6c6;
  border-right: 0;
  padding: 8px 7px;
  display: flex;
  justify-content: flex-end;
  align-items: flex-start;
}

/* sheet */
.sheet-area {
  height: 706px;
  display: flex;
  border-bottom: 1px solid #9e9e9e;
  flex: none;
}

.sheet {
  width: 1899px;
  height: 705px;
  overflow: hidden;
  background: #fff;
  border-right: 1px solid #9e9e9e;
  font-family: Lato, "Open Sans", sans-serif;
  font-size: 13.5px;
  color: #000;
  flex: none;
}

.row-line {
  display: flex;
  height: 20px;
}

.h120 {
  height: 120px;
}

.h60 {
  height: 60px;
}

.ca {
  width: 102px;
}

.cb {
  width: 158px;
}

.cc {
  width: 725px;
}

.c64 {
  width: 64px;
}

.corner {
  width: 26px;
  background: #e6e6e6;
  border-right: 1px solid #b8b8b8;
  border-bottom: 1px solid #9e9e9e;
  position: relative;
  flex: none;
}

.corner i {
  position: absolute;
  right: 3px;
  bottom: 3px;
  border-left: 12px solid transparent;
  border-bottom: 12px solid #b4b4b4;
}

.colhead {
  background: #e6e6e6;
  border-right: 1px solid #d0d0d0;
  border-bottom: 1px solid #9e9e9e;
  text-align: center;
  line-height: 19px;
  color: #444;
  font-size: 13px;
  flex: none;
}

.colhead.sel {
  background: #d2d2d2;
  color: #217346;
  border-bottom: 2px solid #217346;
  border-right-color: #9e9e9e;
}

.rowhead {
  width: 26px;
  background: #e6e6e6;
  border-right: 1px solid #9e9e9e;
  border-bottom: 1px solid #c6c6c6;
  display: flex;
  align-items: flex-end;
  justify-content: center;
  line-height: 19px;
  color: #444;
  font-size: 13px;
  flex: none;
}

.rowhead.sel {
  background: #d2d2d2;
  color: #217346;
  border-right: 2px solid #217346;
}

.cell {
  border-right: 1px solid #d4d4d4;
  border-bottom: 1px solid #d4d4d4;
  padding-left: 2px;
  line-height: 20px;
  white-space: nowrap;
  flex: none;
}

/* Lato's letters and digits run at other widths than the sheet font, per line */
.ls-p2 {
  letter-spacing: 0.25px;
}

.ls-p1 {
  letter-spacing: 0.1px;
}

.ls-m1 {
  letter-spacing: -0.1px;
}

.ls-m2 {
  letter-spacing: -0.2px;
}

.ls-m3 {
  letter-spacing: -0.29px;
}

.ls-m4 {
  letter-spacing: -0.36px;
}

.rest {
  flex: 1;
  border-bottom: 1px solid #d4d4d4;
  background: repeating-linear-gradient(to right, transparent 0 63px, #d4d4d4 63px 64px);
}

.fill-row .ca,
.fill-row .cb,
.fill-row .cc {
  background: #ccc0da;
  border-right-color: #ccc0da;
}

.heading .cell {
  font-weight: 700;
}

.active-cell {
  position: relative;
  outline: 2px solid #217346;
  outline-offset: -1px;
  z-index: 1;
}

.active-cell::after {
  content: "";
  position: absolute;
  right: -3px;
  bottom: -3px;
  width: 5px;
  height: 5px;
  background: #217346;
  border: 1px solid #fff;
}

.vscroll {
  flex: 1;
  padding: 3px 1px 0 3px;
  display: flex;
  flex-direction: column;
  background: #dadada;
}

.sbtn {
  height: 15px;
  background: #fff;
  border: 1px solid #a6a6a6;
  display: flex;
  align-items: center;
  justify-content: center;
  flex: none;
}

.vthumb {
  height: 650px;
  background: #fff;
  border: 1px solid #a6a6a6;
  margin-top: 1px;
  flex: none;
}

.sbtn-down {
  margin-top: auto;
  margin-bottom: 0;
}

/* sheet tabs */
.tabbar {
  height: 25px;
  background: #e6e6e6;
  border-bottom: 0;
  display: flex;
  align-items: stretch;
  font-family: "Open Sans", sans-serif;
  font-size: 12px;
  flex: none;
}

.nav-arrows {
  width: 101px;
  display: flex;
  align-items: center;
  gap: 23px;
  padding-left: 28px;
  border-right: 1px solid #9e9e9e;
  margin: 1px 0 3px;
}

.arrow-l,
.arrow-r {
  display: block;
  border-top: 4px solid transparent;
  border-bottom: 4px solid transparent;
}

.arrow-l {
  border-right: 4px solid #c4c4c4;
}

.arrow-r {
  border-left: 4px solid #c4c4c4;
}

.dark {
  border-left-color: #666;
  border-right-color: #666;
}

.stab {
  display: flex;
  align-items: center;
  justify-content: center;
  border-right: 1px solid #9e9e9e;
  margin: 1px 0 3px;
  white-space: nowrap;
}

.st-optical {
  width: 181px;
  letter-spacing: 0.25px;
}

.st-req {
  width: 109px;
}

.st-ref {
  width: 91px;
}

.st-interp {
  width: 97px;
}

.stab.current {
  width: 88px;
  margin: -1px 0 0 -1px;
  font-size: 12.5px;
  background: #fff;
  color: #217346;
  font-weight: 700;
  border-left: 1px solid #9e9e9e;
  border-bottom: 2px solid #217346;
}

.add-sheet {
  margin: 4px 0 0 33px;
}

.tab-dots {
  width: 2px;
  height: 10px;
  margin: 7px 14px 0 72px;
  border-top: 2px dotted #aaa;
  border-bottom: 2px dotted #aaa;
}

.hscroll {
  width: 1094px;
  height: 15px;
  margin-top: 6px;
  background: #dadada;
  display: flex;
}

.hbtn {
  width: 15px;
  background: #fff;
  border: 1px solid #a6a6a6;
  display: flex;
  align-items: center;
  justify-content: center;
  flex: none;
}

.hthumb {
  width: 997px;
  background: #fff;
  border: 1px solid #a6a6a6;
  border-left: 0;
  flex: none;
}

.hbtn-r {
  margin-left: auto;
}

/* status bar */
.status {
  position: relative;
  flex: 1;
  background: #f1f1f1;
  border-top: 1px solid #d4d4d4;
  margin-top: 2px;
  padding-left: 8px;
  display: flex;
  align-items: center;
  font-size: 11px;
  color: #555;
}

.ready {
  margin-right: auto;
  padding-bottom: 3px;
}

.views {
  display: flex;
  align-self: stretch;
}

.view {
  width: 38px;
  display: flex;
  align-items: center;
  justify-content: center;
}

.view.on {
  background: #c6c6c6;
}

.zoom {
  display: flex;
  align-items: center;
  margin-left: 4px;
}

.zoom-minus,
.zoom-plus {
  position: relative;
  width: 8px;
  height: 2px;
  background: #666;
}

.zoom-plus::after {
  content: "";
  position: absolute;
  left: 3px;
  top: -3px;
  width: 2px;
  height: 8px;
  background: #666;
}

.slider {
  position: relative;
  width: 100px;
  height: 1px;
  margin: 0 4px;
  background: #999;
}

.slider i {
  position: absolute;
  left: 48px;
  top: -5px;
  width: 4px;
  height: 11px;
  background: #666;
}

.pct {
  width: 27px;
  margin: 0 6px 0 16px;
  padding-bottom: 3px;
  white-space: nowrap;
  color: #666;
}

/* overlays */
.ink {
  position: absolute;
  left: 0;
  top: 0;
  pointer-events: none;
}

.strip {
  position: absolute;
  left: 0;
  width: 10px;
  background: #0f0;
}

.strip-top {
  top: 0;
  height: 90px;
}

.strip-bottom {
  top: 990px;
  height: 50px;
}
```
